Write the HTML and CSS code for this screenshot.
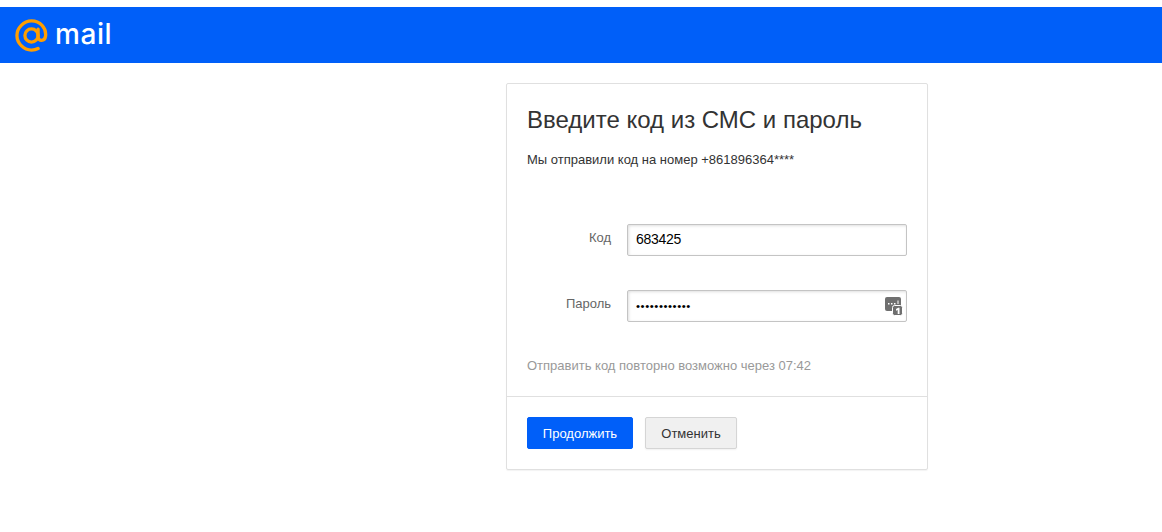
FILE: index.html
```html
<!DOCTYPE html>
<html lang="ru">
<head>
<meta charset="utf-8">
<title>Mail</title>
<link rel="stylesheet" href="styles.css">
</head>
<body>
<header class="topbar">
  <svg class="logo-at" width="33" height="33" viewBox="0 0 34 34" fill="none" stroke="#ff9e00" stroke-width="3.400">
    <circle cx="17" cy="17" r="6.800"/>
    <path d="M23.800 10.500v8c0 4.800 7 4.800 7.700-1 1-8.500-5.800-15.500-14.500-15.500C9 2 2 9 2 17s7 15 15 15c2.500 0 4.800-.5 6.800-1.600" stroke-linecap="round"/>
  </svg>
  <span class="logo-text">mail</span>
</header>
<main class="page">
  <section class="card">
    <div class="card-body">
      <h1 class="title">Введите код из СМС и пароль</h1>
      <p class="note">Мы отправили код на номер +861896364****</p>
      <div class="fields">
        <div class="field">
          <label class="field-label">Код</label>
          <div class="input input-code">683425</div>
        </div>
        <div class="field">
          <label class="field-label">Пароль</label>
          <div class="input input-pass">
            <span class="dots">••••••••••••</span>
            <svg class="key-icon" width="18" height="19" viewBox="0 0 18 19">
              <rect x="0" y="0" width="16" height="14" rx="2" fill="#6f6f6f"/>
              <rect x="7.500" y="8.500" width="10" height="10" rx="2" fill="#6f6f6f" stroke="#fff" stroke-width="1"/>
              <path d="M3 6h1.500v1.500H3zM6 6h1.500v1.500H6zM9 6h1.500v1.500H9zM12.500 3.500h1V7h-1z" fill="#fff"/>
              <path d="M11 12l2.200-1.300h1.300V17h-1.800v-4l-1.700.8z" fill="#fff"/>
            </svg>
          </div>
        </div>
      </div>
      <p class="resend">Отправить код повторно возможно через 07:42</p>
    </div>
    <div class="card-foot">
      <button class="btn btn-primary">Продолжить</button>
      <button class="btn btn-secondary">Отменить</button>
    </div>
  </section>
</main>
</body>
</html>
```
FILE: styles.css
```css
* { box-sizing: border-box; }
html, body { margin: 0; height: 100%; overflow: hidden; }
body {
  background: #fff;
  padding-top: 7px;
  font-family: "Liberation Sans", Arial, sans-serif;
  color: #333;
}
.topbar {
  height: 56px;
  background: #005ff9;
  display: flex;
  align-items: center;
  padding-left: 15px;
  gap: 7px;
}
.logo-at { display: block; margin-top: 1px; }
.logo-text {
  font-family: "Inter", sans-serif;
  font-weight: 500;
  font-size: 28px;
  line-height: 34px;
  color: #fff;
  letter-spacing: 0.6px;
  margin-top: -3px;
}
.page {
  padding: 20px 0 0 506px;
}
.card {
  width: 422px;
  height: 387px;
  border: 1px solid #e0e0e0;
  border-radius: 2px;
  box-shadow: 0 1px 1px rgba(0,0,0,.05);
  display: flex;
  flex-direction: column;
}
.card-body {
  height: 313px;
  padding: 20px 20px 0;
  border-bottom: 1px solid #e0e0e0;
}
.title {
  margin: 0;
  font-weight: 400;
  font-size: 24px;
  line-height: 32px;
  color: #333;
}
.note {
  margin: 15px 0 0;
  font-size: 13px;
  line-height: 18px;
  color: #333;
}
.fields {
  margin-top: 55px;
  display: flex;
  flex-direction: column;
  gap: 34px;
}
.field {
  display: flex;
  align-items: center;
  gap: 16px;
}
.field-label {
  width: 84px;
  text-align: right;
  font-size: 13px;
  line-height: 16px;
  color: #666;
  margin-top: -4px;
}
.input {
  width: 280px;
  height: 32px;
  border: 1px solid #c4c4c4;
  border-radius: 2px;
  box-shadow: inset 1px 1px 3px rgba(0,0,0,.13);
  padding: 0 8px;
  font-size: 14px;
  line-height: 30px;
  color: #000;
  background: #fff;
}
.input-code {
  letter-spacing: -0.3px;
  line-height: 28px;
}
.input-pass {
  display: flex;
  align-items: center;
  justify-content: space-between;
  padding-right: 3px;
}
.dots {
  font-size: 11.500px;
  letter-spacing: 0.55px;
  color: #000;
  margin-top: -1px;
}
.key-icon { display: block; margin-top: 1px; }
.resend {
  margin: 36px 0 0;
  font-size: 13px;
  line-height: 16px;
  color: #999;
}
.card-foot {
  padding: 20px 20px 0;
  display: flex;
  gap: 12px;
}
.btn {
  height: 32px;
  border-radius: 2px;
  font-family: inherit;
  font-size: 13px;
  padding: 0;
  cursor: pointer;
}
.btn-primary {
  width: 106px;
  background: #005ff9;
  border: 1px solid #005ff9;
  color: #fff;
}
.btn-secondary {
  width: 92px;
  background: #f0f0f0;
  border: 1px solid #d5d5d5;
  color: #333;
  box-shadow: 0 1px 2px rgba(0,0,0,.06);
}
```
